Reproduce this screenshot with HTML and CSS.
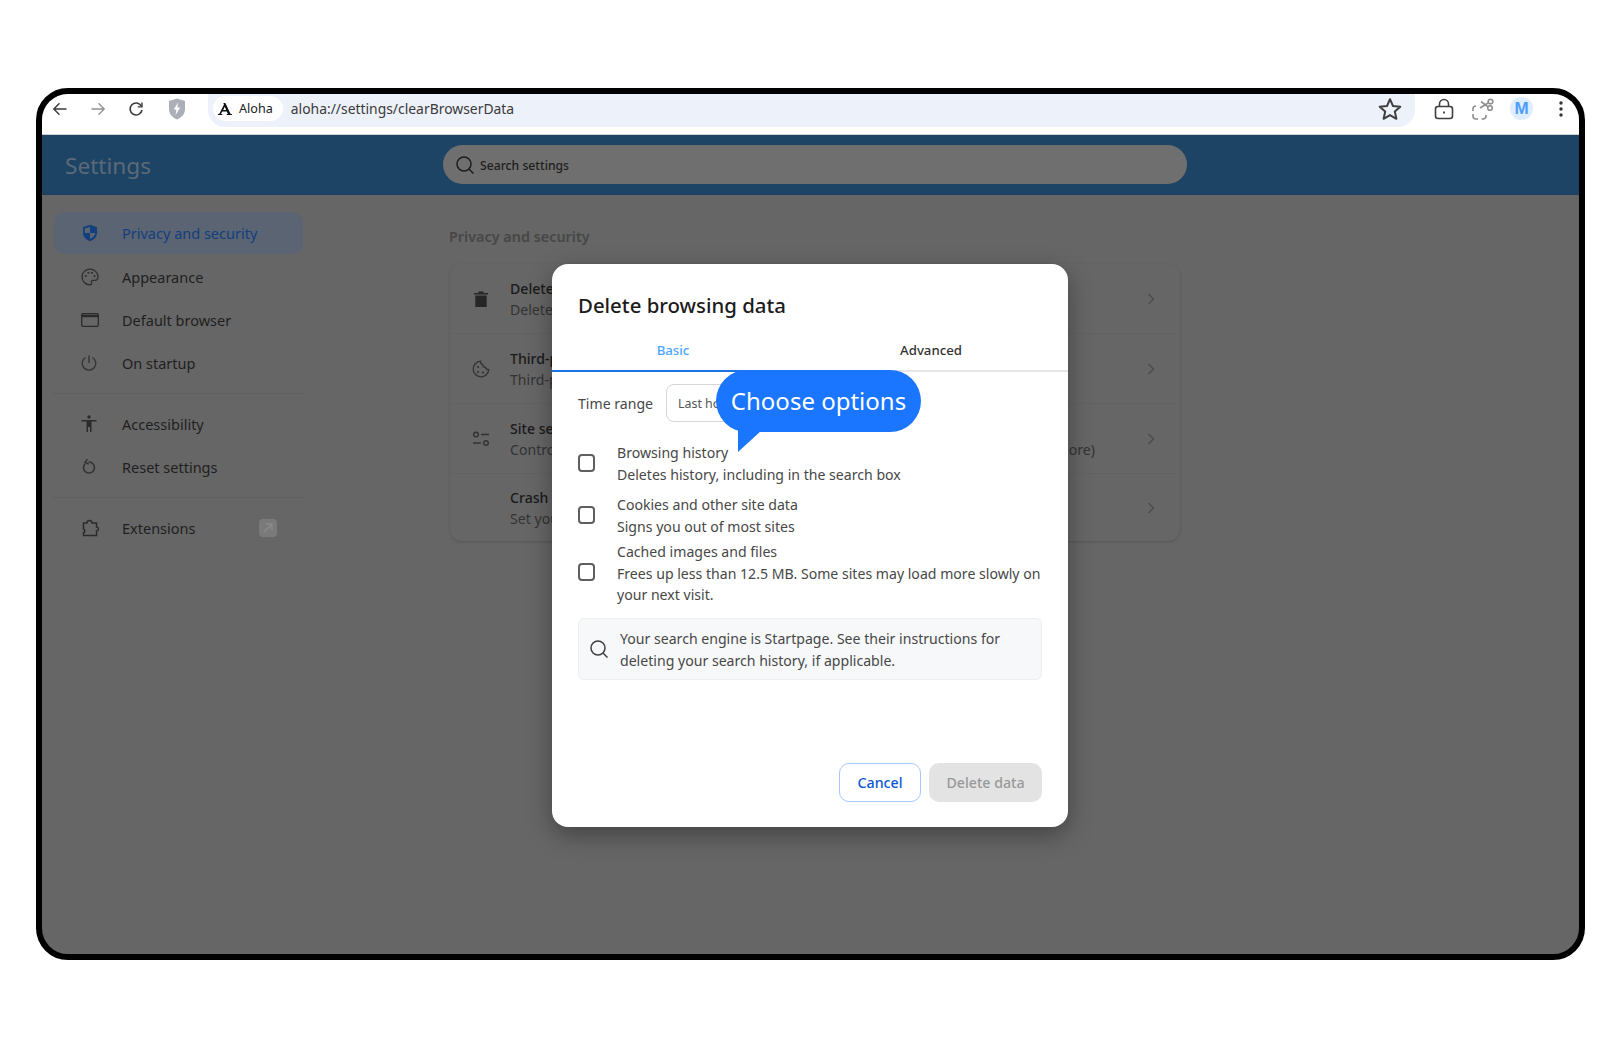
FILE: index.html
```html
<!DOCTYPE html>
<html lang="en">
<head>
    <meta charset="UTF-8">
    <title>Delete browsing data</title>
    <link rel="stylesheet" href="styles.css">
</head>
<body>
    <div class="frame">
        <div class="toolbar">
            <svg class="tb-icon" width="18" height="18" viewBox="0 0 18 18" fill="none" stroke="#3c3c3c" stroke-width="1.4"><path d="M15.5 9H3M8.5 3.3 2.8 9l5.7 5.7"/></svg>
            <svg class="tb-icon" width="18" height="18" viewBox="0 0 18 18" fill="none" stroke="#8f8f8f" stroke-width="1.3"><path d="M2.5 9H15M9.5 3.3 15.2 9l-5.7 5.7"/></svg>
            <svg class="tb-icon tb-reload" width="18" height="18" viewBox="0 0 18 18" fill="none" stroke="#3c3c3c" stroke-width="1.6"><path d="M14.4 6.2A6 6 0 1 0 15 10"/><path d="M15 2.6v4.3h-4.3" stroke-width="1.4"/></svg>
            <svg class="tb-icon tb-shield" width="20" height="24" viewBox="0 0 20 24"><path d="M10 1.5 18 4v8c0 5-3.4 8.500-8 10.500C5.400 20.500 2 17 2 12V4z" fill="#abb0b8"/><path d="M11 5.500 6.800 12.500h2.600L8.600 18l4.500-7.500h-2.700z" fill="#fff"/></svg>
            <div class="omnibox">
                <div class="chip">
                    <svg width="14" height="13" viewBox="0 0 14 13"><path d="M7.400 1 12.600 12H14v1H8.800v-1h1.100L8.800 9.500H4.300L2.900 12H4.300v1H0v-1h1.200L6 2.500 5.300 1zM5.200 8h3L6.800 4.700z" fill="#111"/></svg>
                    <span>Aloha</span>
                </div>
                <span class="url">aloha://settings/clearBrowserData</span>
                <svg class="star" width="26" height="26" viewBox="0 0 26 26" fill="none" stroke="#3f3f3f" stroke-width="2" stroke-linejoin="round"><path d="M13 3.200 16 10l7.300.7-5.500 4.900 1.600 7.200L13 19.100l-6.400 3.700 1.600-7.200-5.500-4.900L10 10z"/></svg>
            </div>
            <div class="tb-right">
                <svg width="20" height="22" viewBox="0 0 20 22" fill="none" stroke="#3f3f3f" stroke-width="1.6"><rect x="1.500" y="8.500" width="17" height="12" rx="2.500"/><path d="M5.500 8.500V6a4.500 4.500 0 0 1 9 0v2.500"/><path d="M10 13.500v2" stroke-width="1.800"/></svg>
                <svg width="22" height="22" viewBox="0 0 22 22" fill="none" stroke="#8e8e8e" stroke-width="1.600"><circle cx="18.500" cy="3.500" r="2.300"/><circle cx="18" cy="10" r="2.300"/><path d="M16.500 4.800 8 10M16 8.800 9 3.500"/><path d="M1 13v-2Q1 8 4 8M1 16v2Q1 21 4 21h2M9.500 21h1.500Q14 21 14 18v-1"/></svg>
                <span class="avatar">M</span>
                <svg class="tb-menu" width="6" height="16" viewBox="0 0 6 16" fill="#333"><circle cx="3" cy="2" r="1.700"/><circle cx="3" cy="8" r="1.700"/><circle cx="3" cy="14" r="1.700"/></svg>
            </div>
        </div>

        <div class="page-header">
            <div class="page-title">Settings</div>
            <div class="search">
                <svg width="20" height="20" viewBox="0 0 20 20" fill="none" stroke="#1c1c1c" stroke-width="1.500"><circle cx="9" cy="9" r="7"/><path d="m14 14 4.500 4.500"/></svg>
                <span class="nudge">Search settings</span>
            </div>
        </div>

        <div class="page-body">
            <nav class="sidebar">
                <div class="nav-item active">
                    <svg width="18" height="18" viewBox="0 0 18 18"><path d="M9 .8 16 3.300v5.200c0 4.300-2.900 7.300-7 8.700-4.100-1.400-7-4.400-7-8.700V3.300z" fill="#123f7d"/><path d="M9 3v6H3.800V4.600zM9 9h5.200c-.3 2.700-2.300 4.600-5.200 5.900z" fill="#5b6472"/></svg>
                    <span>Privacy and security</span>
                </div>
                <div class="nav-item">
                    <svg width="18" height="18" viewBox="0 0 18 18" fill="none" stroke="#2f2f2f" stroke-width="1.300"><path d="M9 1.200C4.600 1.200 1 4.500 1 8.800c0 4.400 3.500 8 8 8 1.400 0 1.900-1 1.500-2-.5-1.200.2-2.400 1.700-2.400H14c1.800 0 3-1.400 3-3.600 0-4.300-3.600-7.600-8-7.600z"/><g fill="#2f2f2f" stroke="none"><circle cx="4.800" cy="8" r="1.100"/><circle cx="7.400" cy="4.800" r="1.100"/><circle cx="11" cy="4.800" r="1.100"/><circle cx="13.500" cy="8" r="1.100"/></g></svg>
                    <span>Appearance</span>
                </div>
                <div class="nav-item">
                    <svg width="18" height="14" viewBox="0 0 18 14" fill="none" stroke="#2b2b2b" stroke-width="1.300"><rect x=".7" y=".7" width="16.600" height="12.600" rx="1"/><path d="M.7 3h16.600" stroke-width="2.400"/></svg>
                    <span>Default browser</span>
                </div>
                <div class="nav-item">
                    <svg width="16" height="16" viewBox="0 0 16 16" fill="none" stroke="#333" stroke-width="1.400"><path d="M4.500 2.500a6.800 6.800 0 1 0 7 0M8 .5v7.500"/></svg>
                    <span>On startup</span>
                </div>
                <div class="nav-sep"></div>
                <div class="nav-item">
                    <svg width="16" height="18" viewBox="0 0 16 18" fill="#2b2b2b"><circle cx="8" cy="2" r="1.700"/><path d="M.5 5h15v1.500h-5V17H9V12H7v5H5.500V6.500h-5z"/></svg>
                    <span>Accessibility</span>
                </div>
                <div class="nav-item">
                    <svg width="16" height="18" viewBox="0 0 16 18" fill="none" stroke="#333" stroke-width="1.600"><path d="M4 5.800a5.500 5.500 0 1 0 8 0 5.500 5.500 0 0 0-4.500-1.800"/><path d="M6.500 1.200 4 4.500l3.700 1.500" stroke-width="1.400"/></svg>
                    <span>Reset settings</span>
                </div>
                <div class="nav-sep"></div>
                <div class="nav-item">
                    <svg width="18" height="18" viewBox="0 0 18 18" fill="none" stroke="#2b2b2b" stroke-width="1.500"><path d="M2.500 4H6c0-3.500 5-3.500 5 0h4.500v4c2.500 0 2.500 4 0 4v4.500h-13v-3c1.800 0 1.800-3.500 0-3.500z"/></svg>
                    <span>Extensions</span>
                    <span class="ext-badge"><svg width="10" height="10" viewBox="0 0 10 10" fill="none" stroke="#8a8a8a" stroke-width="1.500"><path d="M1 9 9 1M3 1h6v6"/></svg></span>
                </div>
            </nav>

            <main class="content">
                <h2 class="section-title">Privacy and security</h2>
                <div class="card">
                    <div class="row">
                        <svg class="row-icon" width="14" height="16" viewBox="0 0 14 16" fill="#262626"><path d="M0 2h4.500V.5h5V2H14v1.600H0zM1.300 4.500h11.400V16H1.300z"/></svg>
                        <div class="row-text"><div class="row-title">Delete browsing data</div><div class="row-sub">Delete history, cookies, cache, and more</div></div>
                        <svg class="chevron" width="8" height="12" viewBox="0 0 8 12" fill="none" stroke="#4c4c4c" stroke-width="1.300"><path d="m1.500 1 5 5-5 5"/></svg>
                    </div>
                    <div class="row">
                        <svg class="row-icon" width="18" height="18" viewBox="0 0 18 18" fill="none" stroke="#333" stroke-width="1.300"><path d="M8.500 1.200a7.800 7.800 0 1 0 8.300 8.300c-1.800.2-3-.7-3.200-2.200-1.700 0-2.900-1-2.900-2.700C9.300 4.300 8.400 3 8.500 1.200z"/><g fill="#333" stroke="none"><circle cx="6" cy="7" r="1.100"/><circle cx="6" cy="12" r="1.100"/><circle cx="11" cy="12.500" r="1.100"/></g></svg>
                        <div class="row-text"><div class="row-title">Third-party cookies</div><div class="row-sub">Third-party cookies are blocked in Incognito mode</div></div>
                        <svg class="chevron" width="8" height="12" viewBox="0 0 8 12" fill="none" stroke="#4c4c4c" stroke-width="1.300"><path d="m1.500 1 5 5-5 5"/></svg>
                    </div>
                    <div class="row">
                        <svg class="row-icon" width="18" height="16" viewBox="0 0 18 16" fill="none" stroke="#333" stroke-width="1.400"><circle cx="4" cy="3.500" r="2.300"/><path d="M9 3.500h8M1 12h8"/><circle cx="14" cy="12" r="2.300"/></svg>
                        <div class="row-text"><div class="row-title">Site settings</div><div class="row-sub">Controls what information sites can use and show (location, camera, pop-ups, and more)</div></div>
                        <svg class="chevron" width="8" height="12" viewBox="0 0 8 12" fill="none" stroke="#4c4c4c" stroke-width="1.300"><path d="m1.500 1 5 5-5 5"/></svg>
                    </div>
                    <div class="row">
                        <span class="row-icon row-icon-blank"></span>
                        <div class="row-text"><div class="row-title">Crash reporting</div><div class="row-sub">Set your crash reporting preferences</div></div>
                        <svg class="chevron" width="8" height="12" viewBox="0 0 8 12" fill="none" stroke="#4c4c4c" stroke-width="1.300"><path d="m1.500 1 5 5-5 5"/></svg>
                    </div>
                </div>
            </main>
        </div>

        <div class="dialog">
            <h1 class="dialog-title">Delete browsing data</h1>
            <div class="tabs">
                <div class="tab active">Basic</div>
                <div class="tab">Advanced</div>
            </div>
            <div class="time-range">
                <span class="nudge">Time range</span>
                <div class="select">Last hour</div>
            </div>
            <div class="check-row first">
                <span class="checkbox"></span>
                <div class="nudge"><div>Browsing history</div><div>Deletes history, including in the search box</div></div>
            </div>
            <div class="check-row second">
                <span class="checkbox"></span>
                <div class="nudge"><div>Cookies and other site data</div><div>Signs you out of most sites</div></div>
            </div>
            <div class="check-row third">
                <span class="checkbox"></span>
                <div class="nudge"><div>Cached images and files</div><div>Frees up less than 12.5 MB. Some sites may load more slowly on your next visit.</div></div>
            </div>
            <div class="info-box">
                <svg width="20" height="20" viewBox="0 0 20 20" fill="none" stroke="#3f3f3f" stroke-width="1.500"><circle cx="9" cy="9" r="7"/><path d="m14 14 4.500 4.500"/></svg>
                <div class="nudge">Your search engine is Startpage. See their instructions for deleting your search history, if applicable.</div>
            </div>
            <div class="dialog-actions">
                <button class="btn btn-cancel">Cancel</button>
                <button class="btn btn-delete">Delete data</button>
            </div>
            <div class="bubble">Choose options</div>
        </div>
    </div>
</body>
</html>
```

FILE: styles.css
```css
* {
    box-sizing: border-box;
}
body {
    margin: 0;
    background: #fff;
    font-family: "Noto Sans", "Open Sans", sans-serif;
    color: #333;
}
.frame {
    position: relative;
    width: 1549px;
    height: 872px;
    margin: 88px 0 0 36px;
    border: 6px solid #000;
    border-radius: 32px;
    background: #666;
    overflow: hidden;
}
.nudge {
    margin: 1px 0 -1px;
}

/* browser toolbar */
.toolbar {
    display: flex;
    align-items: center;
    height: 41px;
    background: #fff;
    border-bottom: 1px solid #d0d0d0;
    padding: 0 0 11px 9px;
}
.tb-icon {
    flex: none;
    margin-right: 20px;
}
.tb-reload {
    margin-right: 22px;
}
.tb-shield {
    margin-right: 21px;
}
.omnibox {
    display: flex;
    align-self: flex-start;
    align-items: center;
    width: 1207px;
    height: 33px;
    padding: 0 12px 4px 5px;
    background: #edf1fa;
    border-radius: 0 0 17px 17px;
}
.chip {
    display: flex;
    align-items: center;
    gap: 7px;
    height: 25px;
    padding: 0 10px 0 5px;
    background: #fff;
    border-radius: 14px;
    font-size: 12.6px;
    color: #222;
}
.url {
    margin-left: 8px;
    font-size: 13.9px;
    color: #3a3a3a;
}
.star {
    margin-left: auto;
}
.tb-right {
    display: flex;
    align-items: center;
    gap: 18px;
    margin-left: 19px;
}
.avatar {
    width: 23px;
    height: 23px;
    margin-left: -2px;
    border-radius: 50%;
    background: #dfeefe;
    color: #4d9dff;
    font-family: "Liberation Sans", sans-serif;
    font-size: 17px;
    font-weight: bold;
    line-height: 23px;
    text-align: center;
}
.tb-menu {
    margin-left: 7px;
}

/* dimmed settings page */
.page-header {
    display: flex;
    align-items: center;
    height: 60px;
    padding-left: 23px;
    background: #1d4365;
    border-bottom: 1px solid #1b3f5f;
}
.page-title {
    width: 378px;
    padding-top: 2px;
    font-size: 22.6px;
    color: #5c6a78;
}
.search {
    display: flex;
    align-items: center;
    gap: 5px;
    width: 744px;
    height: 39px;
    padding-left: 12px;
    background: #6f6f6f;
    border-radius: 20px;
    font-size: 12.2px;
    font-weight: 500;
    color: #1e1e1e;
}
.page-body {
    display: flex;
}
.sidebar {
    width: 263px;
    margin: 17px 0 0 12px;
}
.nav-item {
    display: flex;
    align-items: center;
    width: 249px;
    height: 43px;
    padding-left: 36px;
    font-size: 14.5px;
    color: #1f1f1f;
    position: relative;
}
.nav-item svg {
    flex: none;
    position: absolute;
    left: 27px;
}
.nav-item > span:not(.ext-badge) {
    margin-left: 32px;
}
.nav-item.active {
    height: 42px;
    margin-bottom: 1px;
    background: #5b6472;
    border-radius: 10px;
    color: #123f7d;
}
.nav-sep {
    width: 252px;
    height: 1px;
    margin: 9px 0 8px -1px;
    background: #5f5f5f;
}
.ext-badge {
    position: absolute;
    left: 205px;
    width: 18px;
    height: 18px;
    border-radius: 4px;
    background: #7a7a7a;
}
.nav-item .ext-badge svg {
    left: 4px;
    top: 4px;
}
.content {
    width: 731px;
    margin-left: 132px;
}
.section-title {
    margin: 32px 0 17px;
    font-size: 14.4px;
    line-height: 20px;
    font-weight: 600;
    color: #474747;
}
.card {
    margin-left: 1px;
    background: #666;
    border-radius: 12px;
    box-shadow: 0 1px 3px rgba(0, 0, 0, 0.16);
}
.row {
    display: flex;
    align-items: center;
    height: 70px;
    padding: 0 25px 0 22px;
    border-bottom: 1px solid #626262;
}
.row:last-child {
    height: 67px;
    border-bottom: none;
}
.row-icon {
    flex: none;
    width: 18px;
    margin-right: 20px;
}
.row-icon-blank {
    height: 18px;
}
.row-text {
    flex: 1;
    font-size: 14.1px;
    line-height: 21px;
    white-space: nowrap;
}
.row-title {
    font-weight: 500;
    color: #1a1a1a;
}
.row-sub {
    color: #333;
}
.chevron {
    flex: none;
}

/* dialog */
.dialog {
    position: absolute;
    left: 510px;
    top: 170px;
    width: 516px;
    height: 563px;
    padding-top: 27px;
    background: #fff;
    border-radius: 16px;
    box-shadow: 0 8px 24px rgba(0, 0, 0, 0.35);
    font-size: 14.1px;
    line-height: 21.5px;
    color: #474747;
}
.dialog-title {
    margin: 0 26px;
    font-size: 20.4px;
    line-height: 29px;
    font-weight: 500;
    color: #1c1c1c;
}
.tabs {
    display: flex;
    height: 40px;
    margin-top: 12px;
    border-bottom: 2px solid #e6e6e6;
}
.tab {
    flex: 1;
    padding-top: 8px;
    font-size: 13.2px;
    font-weight: 500;
    text-align: center;
    color: #333;
}
.tab.active {
    flex: none;
    width: 242px;
    height: 40px;
    border-bottom: 2px solid #1a73e8;
    color: #4da6ff;
}
.time-range {
    display: flex;
    align-items: center;
    gap: 13px;
    margin: 12px 26px 0;
}
.select {
    width: 220px;
    height: 38px;
    padding: 1px 0 0 11px;
    border: 1px solid #d6d6d6;
    border-radius: 8px;
    font-size: 12.4px;
    line-height: 36px;
    color: #555;
}
.check-row {
    display: flex;
    align-items: center;
    gap: 22px;
    margin: 0 26px;
}
.check-row.first {
    margin-top: 19px;
}
.check-row.second {
    margin-top: 9px;
}
.check-row.third {
    margin-top: 4px;
}
.checkbox {
    flex: none;
    width: 17px;
    height: 18px;
    border: 2px solid #5f5f5f;
    border-radius: 4px;
}
.info-box {
    display: flex;
    align-items: center;
    gap: 11px;
    height: 62px;
    margin: 13px 26px 0;
    padding-left: 10px;
    background: #f7f8fa;
    border: 1px solid #eceef0;
    border-radius: 6px;
}
.info-box svg {
    flex: none;
}
.dialog-actions {
    display: flex;
    justify-content: flex-end;
    gap: 8px;
    margin: 83px 26px 0;
}
.btn {
    height: 39px;
    border-radius: 10px;
    font-family: inherit;
    font-size: 14.2px;
    font-weight: 500;
}
.btn-cancel {
    width: 82px;
    background: #fff;
    border: 1.5px solid #a8c7fa;
    color: #0b57d0;
}
.btn-delete {
    width: 113px;
    background: #e3e3e3;
    border: none;
    color: #999;
}
.bubble {
    position: absolute;
    left: 164px;
    top: 106px;
    width: 205px;
    height: 62px;
    border-radius: 31px;
    background: #1a75ff;
    color: #fff;
    font-size: 24px;
    line-height: 61px;
    text-align: center;
}
.bubble::after {
    content: "";
    position: absolute;
    left: 22px;
    top: 60px;
    border-top: 22px solid #1a75ff;
    border-right: 24px solid transparent;
    border-left: 0;
}
```
